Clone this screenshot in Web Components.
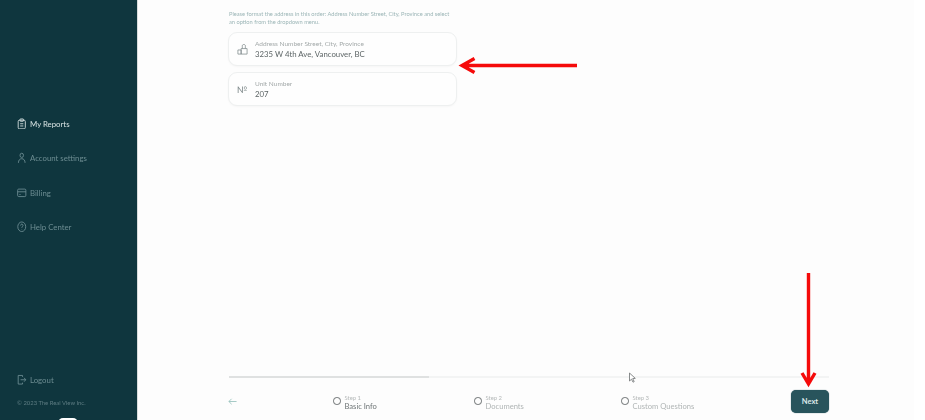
<!DOCTYPE html>
<html>
<head>
<meta charset="utf-8">
<title>New report</title>
<style>
  html, body { margin: 0; height: 420px; overflow: hidden; background: #fff; }
  body { font-family: "Lato", "Liberation Sans", sans-serif; }
  report-app { height: 420px; }
</style>
</head>
<body>
<report-app>
  <app-sidebar slot="side">
    <nav-item icon="clipboard" active>My Reports</nav-item>
    <nav-item icon="user">Account settings</nav-item>
    <nav-item icon="card">Billing</nav-item>
    <nav-item icon="help">Help Center</nav-item>
    <nav-item icon="logout" slot="bottom">Logout</nav-item>
  </app-sidebar>
  <address-form slot="main">
    <field-card label="Address Number Street, City, Province" value="3235 W 4th Ave, Vancouver, BC" icon="home"></field-card>
    <field-card label="Unit Number" value="207" icon="no"></field-card>
    <step-footer slot="footer">
      <step-item n="1" name="Basic Info" current></step-item>
      <step-item n="2" name="Documents"></step-item>
      <step-item n="3" name="Custom Questions"></step-item>
    </step-footer>
  </address-form>
  <red-arrows slot="over"></red-arrows>
</report-app>

<script>
  const ICONS = {
    clipboard: '<rect x="1.500" y="2.300" width="9" height="9" rx="1.400"/><rect x="3.800" y="1" width="4.400" height="2.400" rx=".6"/><path d="M4 6h4M4 8.300h4"/>',
    user: '<circle cx="6" cy="3.500" r="2.200"/><path d="M1.800 11.300c0-2.800 1.800-4.300 4.200-4.300s4.200 1.500 4.200 4.300"/>',
    card: '<rect x=".8" y="2.200" width="10.400" height="7.800" rx="1.300"/><path d="M.8 5h10.400M3 7.800h1.500"/>',
    help: '<circle cx="6" cy="6" r="5"/><path d="M4.500 4.700c.1-1 .8-1.500 1.600-1.500s1.500.6 1.500 1.400c0 1.200-1.600 1.300-1.600 2.500M6 8.600v.4"/>',
    logout: '<path d="M7 3V1.500H1.500v9H7V9M4.500 6H11M9 4l2 2-2 2"/>'
  };

  class ReportApp extends HTMLElement {
    constructor() {
      super();
      this.attachShadow({ mode: 'open' }).innerHTML = `
        <style>
          :host { display: flex; width: 925px; position: relative; }
          .side { flex: 0 0 137px; display: flex; }
          .main { flex: 0 0 777px; background: #fdfdfd; border-left: 1px solid #d8dcdc; box-sizing: border-box; display: flex; }
        </style>
        <div class="side"><slot name="side"></slot></div>
        <div class="main"><slot name="main"></slot></div>
        <slot name="over"></slot>
      `;
    }
  }

  class AppSidebar extends HTMLElement {
    constructor() {
      super();
      this.attachShadow({ mode: 'open' }).innerHTML = `
        <style>
          :host { display: flex; flex-direction: column; width: 137px; height: 420px; background: #0f363e; padding: 115px 0 0 17px; box-sizing: border-box; position: relative; overflow: hidden; }
          .top { display: flex; flex-direction: column; gap: 17.500px; flex: 1; }
          .copy { font-size: 5.900px; line-height: 8px; color: #5d7c82; margin: 11px 0 13px; filter: blur(.4px); }
          .home { position: absolute; left: 58px; bottom: -8px; width: 20px; height: 10px; border-radius: 5px; background: #fff; }
        </style>
        <div class="top"><slot></slot></div>
        <slot name="bottom"></slot>
        <div class="copy">© 2023 The Real View Inc.</div>
        <div class="home"></div>
      `;
    }
  }

  class NavItem extends HTMLElement {
    constructor() {
      super();
      const active = this.hasAttribute('active');
      const icon = ICONS[this.getAttribute('icon')];
      this.attachShadow({ mode: 'open' }).innerHTML = `
        <style>
          :host { display: flex; align-items: center; gap: 3.500px; height: 17px; font-size: 7.800px; color: ${active ? '#d9e4e4' : '#6d8d92'}; }
          svg { width: 9.500px; height: 11.500px; fill: none; stroke: currentColor; stroke-width: 1; flex: none; }
          span { filter: blur(.35px); }
        </style>
        <svg viewBox="0 0 12 12" preserveAspectRatio="none">${icon}</svg>
        <span><slot></slot></span>
      `;
    }
  }

  class AddressForm extends HTMLElement {
    constructor() {
      super();
      this.attachShadow({ mode: 'open' }).innerHTML = `
        <style>
          :host { display: flex; flex-direction: column; flex: 1; height: 420px; box-sizing: border-box; padding: 10px 0 0 90px; }
          .hint { width: 224px; margin: 0 0 6px 1px; font-size: 5.700px; line-height: 8px; color: #9bb5b6; filter: blur(.3px); }
          .fields { display: flex; flex-direction: column; gap: 6px; flex: 1; }
        </style>
        <div class="hint">Please format the address in this order: Address Number Street, City, Province and select an option from the dropdown menu.</div>
        <div class="fields"><slot></slot></div>
        <slot name="footer"></slot>
      `;
    }
  }

  class FieldCard extends HTMLElement {
    constructor() {
      super();
      const icon = this.getAttribute('icon') === 'home'
        ? '<svg viewBox="0 0 12 12"><path d="M1 6.500h3.500v4.500H1zM4.500 5h6.500v6H4.500zM5.800 5V3a1.800 1.800 0 1 1 3.300 0v2"/></svg>'
        : '<b>№</b>';
      this.attachShadow({ mode: 'open' }).innerHTML = `
        <style>
          :host { display: flex; align-items: center; width: 229px; height: 34px; box-sizing: border-box; border: 1px solid #eef0f0; border-radius: 9px; background: #fefefe; box-shadow: 0 1px 2px rgba(0,0,0,.03); }
          .ic { flex: 0 0 26px; display: flex; justify-content: center; color: #7c8788; }
          svg { width: 11px; height: 11px; fill: none; stroke: currentColor; stroke-width: .8; }
          b { font-weight: 400; font-size: 9px; filter: blur(.3px); }
          .txt { display: flex; flex-direction: column; gap: 2px; padding-top: 2px; filter: blur(.3px); }
          small { font-size: 6.500px; line-height: 7px; color: #a3a9a9; }
          span { font-size: 7.800px; line-height: 11px; color: #5d6566; }
        </style>
        <div class="ic">${icon}</div>
        <div class="txt"><small>${this.getAttribute('label')}</small><span>${this.getAttribute('value')}</span></div>
      `;
    }
  }

  class StepFooter extends HTMLElement {
    constructor() {
      super();
      this.attachShadow({ mode: 'open' }).innerHTML = `
        <style>
          :host { display: block; width: 600px; height: 44px; margin-left: 1px; }
          .bar { height: 2px; background: #f3f4f4; }
          .bar div { width: 200px; height: 2px; background: #dfe1e1; }
          .row { display: flex; align-items: center; height: 23px; margin-top: 12px; }
          .back { flex: 0 0 105px; color: #9cc4bf; display: flex; margin-left: -1px; }
          .back svg { width: 9px; height: 9px; fill: none; stroke: currentColor; stroke-width: 1; }
          .steps { display: flex; }
          button { margin-left: auto; width: 38px; height: 23px; border: 0; border-radius: 5px; background: #28545c; color: #dfeaea; font: 700 7.500px "Lato", sans-serif; padding: 0; box-shadow: 0 0 1px #28545c; }
        </style>
        <div class="bar"><div></div></div>
        <div class="row">
          <div class="back"><svg viewBox="0 0 10 10"><path d="M9.500 5H1M4 2L1 5l3 3"/></svg></div>
          <div class="steps"><slot></slot></div>
          <button>Next</button>
        </div>
      `;
    }
  }

  class StepItem extends HTMLElement {
    constructor() {
      super();
      const cur = this.hasAttribute('current');
      const widths = { 1: 141, 2: 147, 3: 120 };
      this.attachShadow({ mode: 'open' }).innerHTML = `
        <style>
          :host { display: flex; align-items: center; gap: 4px; width: ${widths[this.getAttribute('n')]}px; }
          i { width: 5.500px; height: 5.500px; border: 1.400px solid #6a6f70; border-radius: 50%; flex: none; margin-top: -1px; }
          .t { display: flex; flex-direction: column; padding-top: 1px; filter: blur(.3px); }
          small { font-size: 5.900px; line-height: 7px; color: #b5b9b9; }
          span { font-size: 7.600px; line-height: 10px; color: ${cur ? '#6f7677' : '#b0b5b5'}; white-space: nowrap; }
        </style>
        <i></i>
        <div class="t"><small>Step ${this.getAttribute('n')}</small><span>${this.getAttribute('name')}</span></div>
      `;
    }
  }

  // annotations and the mouse pointer sit over the page
  class RedArrows extends HTMLElement {
    constructor() {
      super();
      this.attachShadow({ mode: 'open' }).innerHTML = `
        <style>
          :host { position: absolute; inset: 0; pointer-events: none; }
          svg { position: absolute; left: 0; top: 0; width: 925px; height: 420px; }
        </style>
        <svg viewBox="0 0 925 420" fill="none">
          <g stroke="#f50a0a" stroke-width="3.400">
            <path d="M577 65.500H463M474.500 58.500l-12.500 7 12.500 7"/>
            <path d="M808.500 273v111M802 373l6.500 11 6.500-11"/>
          </g>
          <path d="M629.500 373v8l2-1.800 1.500 3 1.200-.6-1.500-3 2.600-.2z" fill="#fff" stroke="#6b6f70" stroke-width=".8"/>
        </svg>
      `;
    }
  }

  customElements.define('report-app', ReportApp);
  customElements.define('app-sidebar', AppSidebar);
  customElements.define('nav-item', NavItem);
  customElements.define('address-form', AddressForm);
  customElements.define('field-card', FieldCard);
  customElements.define('step-footer', StepFooter);
  customElements.define('step-item', StepItem);
  customElements.define('red-arrows', RedArrows);
</script>
</body>
</html>
